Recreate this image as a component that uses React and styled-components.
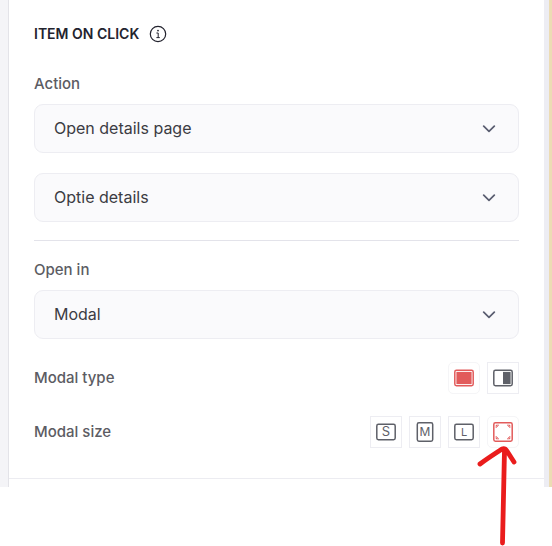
import React, { useState } from "react"
import styled, { createGlobalStyle } from 'styled-components';

const GlobalStyle = createGlobalStyle`
  * { box-sizing: border-box; }
  body {
    margin: 0;
    background-color: #fff;
    font-family: Inter, "Liberation Sans", sans-serif;
  }
`;

const SelectField = ({ id, label, options }) => (
  <Field>
    {label && <Label htmlFor={id}>{label}</Label>}
    <SelectBox>
      <Select id={id} aria-label={label ? undefined : "Details page"}>
        {options.map(option => <option key={option}>{option}</option>)}
      </Select>
      <Chevron width="14" height="8" viewBox="0 0 14 8" aria-hidden="true">
        <path d="M1.7 1.2L7 6.4L12.3 1.2" fill="none" stroke="#595d70" strokeWidth="1.7" strokeLinecap="round" strokeLinejoin="round" />
      </Chevron>
    </SelectBox>
  </Field>
)

const InfoIcon = () => (
  <svg width="18" height="18" viewBox="0 0 18 18" aria-hidden="true">
    <circle cx="9" cy="9" r="7.7" fill="none" stroke="#23232e" strokeWidth="1.2" />
    <circle cx="9" cy="5.6" r="0.9" fill="#23232e" />
    <path d="M7.4 8H9.2V12.6M7.4 12.6H10.8" fill="none" stroke="#23232e" strokeWidth="1" />
  </svg>
)

const FrameIcon = ({ children, portrait, tall }) => {
  const w = portrait ? 15.4 : 18.4
  const h = portrait || tall ? 18.4 : 15.4
  return (
    <svg width="20" height="20" viewBox="0 0 20 20" aria-hidden="true">
      <rect x={10 - w / 2} y={10 - h / 2} width={w} height={h} rx="1.6" fill="none" stroke="currentColor" strokeWidth="1.5" />
      {children}
    </svg>
  )
}

const Letter = ({ children, size = 12 }) => (
  <text x="10" y="14" textAnchor="middle" fontSize={size} fill="currentColor">{children}</text>
)

const modalTypes = [
  { id: 'center', name: 'Center', icon: <FrameIcon><rect x="2.4" y="3.9" width="15.2" height="12.2" fill="currentColor" /></FrameIcon> },
  { id: 'side', name: 'Side', icon: <FrameIcon><rect x="10" y="3.9" width="7.6" height="12.2" fill="currentColor" /></FrameIcon> },
]

const modalSizes = [
  { id: 's', name: 'Small', icon: <FrameIcon><Letter size={13}>S</Letter></FrameIcon> },
  { id: 'm', name: 'Medium', icon: <FrameIcon portrait><Letter>M</Letter></FrameIcon> },
  { id: 'l', name: 'Large', icon: <FrameIcon><Letter size={11}>L</Letter></FrameIcon> },
  {
    id: 'full',
    name: 'Full screen',
    icon: (
      <FrameIcon tall>
        <path d="M3.2 6V3.2H6M14 3.2H16.8V6M16.8 14V16.8H14M6 16.8H3.2V14M3.2 3.2L4.8 4.8M16.8 3.2L15.2 4.8M16.8 16.8L15.2 15.2M3.2 16.8L4.8 15.2" fill="none" stroke="currentColor" strokeWidth="0.9" />
      </FrameIcon>
    ),
  },
]

const OptionRow = ({ label, options, value, onChange, children }) => (
  <Row role="group" aria-label={label}>
    <Label as="span">{label}</Label>
    <Options>
      {options.map(option => (
        <IconButton
          key={option.id}
          type="button"
          aria-label={option.name}
          aria-pressed={value === option.id}
          $active={value === option.id}
          onClick={() => onChange(option.id)}
        >
          {option.icon}
        </IconButton>
      ))}
      {children}
    </Options>
  </Row>
)

const App = () => {

  const [modalType, setModalType] = useState('center')
  const [modalSize, setModalSize] = useState('full')

  return (
    <Screen>
      <GlobalStyle />
      <Page>
        <LeftGutter />
        <Panel>
          <Section>
            <Heading>
              <Title>ITEM ON CLICK</Title>
              <InfoButton type="button" aria-label="About item on click"><InfoIcon /></InfoButton>
            </Heading>

            <Fields>
              <SelectField id="action" label="Action" options={['Open details page']} />
              <SelectField id="details" options={['Optie details']} />
            </Fields>

            <Divider />

            <SelectField id="open-in" label="Open in" options={['Modal']} />

            <Rows>
              <OptionRow label="Modal type" options={modalTypes} value={modalType} onChange={setModalType} />
              <OptionRow label="Modal size" options={modalSizes} value={modalSize} onChange={setModalSize}>
                <Arrow width="44" height="102" viewBox="0 0 44 102" aria-hidden="true">
                  <path d="M27.5 99C28 70 29 40 29.5 6M5 20C13 14 21 9 27 5Q30 4 32 7L39 18" fill="none" stroke="#ea1c1c" strokeWidth="4.8" strokeLinecap="round" strokeLinejoin="round" />
                </Arrow>
              </OptionRow>
            </Rows>
          </Section>
        </Panel>
        <RightGutter />
      </Page>
    </Screen>
  )
}

export default App

const Screen = styled.div`
  min-height: 100vh;
`;

const Page = styled.div`
  display: flex;
`;

const LeftGutter = styled.div`
  flex: 0 0 8px;
  background-color: #f4f4f7;
`;

const RightGutter = styled.div`
  flex: 0 0 8px;
  background-color: #ededf3;
  border-right: 3px solid #ecdcb4;
`;

const Panel = styled.main`
  flex: 1;
  min-width: 0;
  padding-bottom: 8px;
  border-left: 1px solid #e3e3e8;
`;

const Section = styled.section`
  padding: 24px 25px 30px;
  border-bottom: 1px solid #ececf1;
`;

const Heading = styled.div`
  display: flex;
  align-items: center;
  gap: 10px;
  height: 20px;
  margin-bottom: 30px;
`;

const Title = styled.h2`
  margin: 0;
  color: #23232e;
  font-size: 14px;
  font-weight: 600;
  line-height: 20px;
`;

const InfoButton = styled.button`
  display: flex;
  padding: 0;
  border: 0;
  background: none;
  cursor: pointer;
`;

const Fields = styled.div`
  display: flex;
  flex-direction: column;
  gap: 20px;
`;

const Field = styled.div`
  display: flex;
  flex-direction: column;
  gap: 10px;
`;

const Label = styled.label`
  color: #5c5c63;
  font-size: 15px;
  font-weight: 500;
  line-height: 20px;
`;

const SelectBox = styled.div`
  position: relative;
`;

const Select = styled.select`
  display: block;
  width: 100%;
  height: 49px;
  padding: 0 48px 2px 19px;
  appearance: none;
  border: 1px solid #ededf2;
  border-radius: 9px;
  background-color: #fafafc;
  color: #3c3c43;
  font-family: inherit;
  font-size: 16px;
  cursor: pointer;
`;

const Chevron = styled.svg`
  position: absolute;
  top: 21px;
  right: 23px;
  pointer-events: none;
`;

const Divider = styled.hr`
  height: 1px;
  margin: 18px 0 19px;
  border: 0;
  background-color: #e3e3ea;
`;

const Rows = styled.div`
  display: flex;
  flex-direction: column;
  gap: 22px;
  margin-top: 23px;
`;

const Row = styled.div`
  display: flex;
  align-items: center;
  justify-content: space-between;
`;

const Options = styled.div`
  position: relative;
  display: flex;
  gap: 7px;
`;

const IconButton = styled.button`
  display: flex;
  align-items: center;
  justify-content: center;
  width: 32px;
  height: 32px;
  padding: 0;
  border: 1px solid ${props => props.$active ? '#f5f5f7' : '#ededf2'};
  border-radius: ${props => props.$active ? '5px' : '0'};
  background-color: #fff;
  color: ${props => props.$active ? '#e25b5b' : '#5e6068'};
  font-family: inherit;
  cursor: pointer;
`;

const Arrow = styled.svg`
  position: absolute;
  top: 28px;
  right: 0;
  pointer-events: none;
`;
